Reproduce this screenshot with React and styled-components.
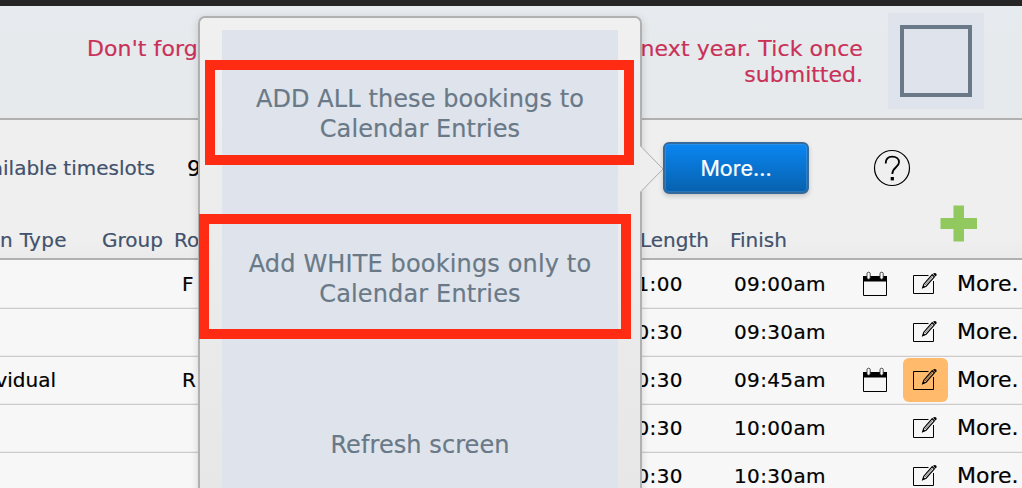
import React from "react";
import styled, { createGlobalStyle, css } from "styled-components";

const GlobalStyle = createGlobalStyle`
  * {
    box-sizing: border-box;
  }
  body {
    margin: 0;
    overflow: hidden;
    font-family: "DejaVu Sans", Verdana, sans-serif;
    -webkit-text-stroke: 0.2px;
  }
`;

const bookings = [
  { room: "F", length: "1:00", finish: "09:00am", calendar: true },
  { length: "0:30", finish: "09:30am" },
  { type: "vidual", room: "R", length: "0:30", finish: "09:45am", calendar: true, flagged: true },
  { length: "0:30", finish: "10:00am" },
  { length: "0:30", finish: "10:30am" },
];

const CalendarIcon = () => (
  <svg width="26" height="26" viewBox="0 0 26 26" fill="none">
    <path d="M1.5 5.5V24.5H24.5V5.5" stroke="#000" strokeWidth="1" />
    <path d="M1 5H25V10.5H1Z" fill="#000" />
    <rect x="5" y="1.2" width="3.2" height="7" rx="1.6" fill="#fff" stroke="#333" strokeWidth="0.9" />
    <rect x="18" y="1.2" width="3.2" height="7" rx="1.6" fill="#fff" stroke="#333" strokeWidth="0.9" />
  </svg>
);

const EditIcon = () => (
  <svg width="26" height="26" viewBox="0 0 26 26" fill="none">
    <path d="M16.5 4.5H1.5V22.5H21.5V10" stroke="#000" strokeWidth="1" />
    <path d="M20.2 3.7L11.8 13.2L10.7 16.7L14.1 15.2L22.4 5.8Z" stroke="#000" strokeWidth="1.2" />
    <path d="M20.5 5.5L13 14" stroke="#000" strokeWidth="0.5" />
    <path d="M10.2 17.3L11.4 14.2L13.2 15.8Z" fill="#000" />
    <path d="M21 2.7Q22.9 1.2 24.4 2.8Q25.4 4.4 23.5 5.6Z" fill="#000" />
  </svg>
);

const HelpIcon = () => (
  <svg width="38" height="38" viewBox="0 0 38 38" fill="none">
    <circle cx="19" cy="19" r="17.5" stroke="#000" strokeWidth="1.2" />
    <path d="M12.7 14.5C12.7 10 15.2 7.7 19.3 7.7C23.5 7.7 26 10 26 13.2C26 18.5 19.3 18.2 19.3 25" stroke="#000" strokeWidth="1.8" />
    <rect x="17.7" y="28" width="3.2" height="3.4" fill="#000" />
  </svg>
);

const App = () => {
  return (
    <Screen>
      <GlobalStyle />
      <TopStrip />
      <Banner>
        <Reminder>
          <ReminderLine>
            <span>Don't forg</span>
            <span>next year. Tick once</span>
          </ReminderLine>
          <div>submitted.</div>
        </Reminder>
        <TickArea>
          <TickBox />
        </TickArea>
      </Banner>
      <Filters>
        <FilterLabel>available timeslots</FilterLabel>
        <FilterValue>9</FilterValue>
        <MoreButton>More...</MoreButton>
        <HelpIcon />
      </Filters>
      <HeaderRow>
        <TypeHeader>n Type</TypeHeader>
        <Cell $left={35}>Group</Cell>
        <Cell>Ro</Cell>
        <Cell $end>Length</Cell>
        <Cell $left={21}>Finish</Cell>
        <AddIcon width="38" height="38" viewBox="0 0 38 38">
          <path d="M13.5 0.5H24V13H37V24H24V36.5H13.5V24H0.5V13H13.5Z" fill="#92c95f" />
        </AddIcon>
      </HeaderRow>
      {bookings.map((b) => (
        <BookingRow key={b.finish}>
          <TypeCell>{b.type}</TypeCell>
          <RoomCell>{b.room}</RoomCell>
          <LengthCell>{b.length}</LengthCell>
          <FinishCell>{b.finish}</FinishCell>
          <IconCell>{b.calendar && <CalendarIcon />}</IconCell>
          <EditButton $flagged={b.flagged}>
            <EditIcon />
          </EditButton>
          <RowMore>More.</RowMore>
        </BookingRow>
      ))}
      {/* POPOVER */}
      <Popover>
        <PopoverItem>ADD ALL these bookings to Calendar Entries</PopoverItem>
        <PopoverItem>Add WHITE bookings only to Calendar Entries</PopoverItem>
        <PopoverItem>Refresh screen</PopoverItem>
        <Arrow width="24" height="48" viewBox="0 0 24 48">
          <path d="M0 1.5H1.5L23 24L1.5 46.5H0Z" fill="#eeeeee" />
          <path d="M1 1.5L23 24L1 46.5" fill="none" stroke="#ababab" strokeWidth="1" />
        </Arrow>
      </Popover>
      {/* HIGHLIGHTS */}
      <Highlight $x={205} $y={60} $w={429} $h={105} />
      <Highlight $x={199} $y={214} $w={432} $h={125} />
    </Screen>
  );
};

const Screen = styled.div`
  position: relative;
  display: flex;
  flex-direction: column;
  width: 1022px;
  height: 488px;
  overflow: hidden;
  background: #efefef;
  white-space: nowrap;
`;

const TopStrip = styled.div`
  flex: none;
  height: 6px;
  background: #262626;
`;

const Banner = styled.div`
  flex: none;
  height: 114px;
  display: flex;
  justify-content: flex-end;
  padding: 7px 38px 0 87px;
  background: linear-gradient(#e6ebf0, #e6eaec 30%);
  border-bottom: 2px solid #b0b0b0;
`;

const Reminder = styled.div`
  flex: 1;
  padding: 23px 25px 0 0;
  font-size: 22px;
  line-height: 26px;
  text-align: right;
  color: #c93159;
`;

const ReminderLine = styled.div`
  display: flex;
  justify-content: space-between;
  letter-spacing: 0.1px;
`;

const TickArea = styled.div`
  width: 96px;
  height: 96px;
  padding: 12px;
  background: #dfe4ec;
`;

const TickBox = styled.div`
  width: 72px;
  height: 72px;
  border: 4px solid #697987;
`;

const Filters = styled.div`
  flex: none;
  height: 85px;
  display: flex;
  align-items: center;
  padding-top: 11px;
  & > svg {
    margin-left: 64px;
  }
`;

const FilterLabel = styled.div`
  width: 155px;
  display: flex;
  justify-content: flex-end;
  font-size: 20px;
  color: #42526c;
`;

const FilterValue = styled.div`
  width: 476px;
  margin-left: 32px;
  font-size: 22px;
  color: #000;
`;

const MoreButton = styled.button`
  width: 146px;
  height: 52px;
  padding: 0;
  border: 2px solid #356a9b;
  border-radius: 6px;
  background: linear-gradient(#0a86f2, #0761ae);
  box-shadow: inset 0 0 0 1px rgba(110, 160, 205, 0.35), 0 2px 5px rgba(0, 0, 0, 0.18);
  font-family: Inter, sans-serif;
  font-size: 21.5px;
  color: #fff;
`;

const HeaderRow = styled.div`
  flex: none;
  height: 55px;
  display: grid;
  grid-template-columns: 67px 107px 466px 69px 231px 38px;
  background: linear-gradient(#efefef 60%, #ebebeb);
  border-bottom: 2px solid #b0b0b0;
  font-size: 20px;
  line-height: 24px;
  color: #42526c;
`;

const Cell = styled.div`
  padding-top: 23px;
  padding-left: ${(props) => props.$left || 0}px;
  ${(props) =>
    props.$end &&
    css`
      display: flex;
      justify-content: flex-end;
    `}
`;

const TypeHeader = styled(Cell)`
  letter-spacing: 0.3px;
`;

const AddIcon = styled.svg`
  display: block;
`;

const BookingRow = styled.div`
  flex: none;
  height: 48px;
  display: grid;
  grid-template-columns: 56px 444px 183px 179px 41px 45px 1fr;
  align-items: center;
  padding-bottom: 2px;
  background: #f7f7f7;
  border-bottom: 1px solid #cccccc;
  box-shadow: inset 0 -1px #ececec;
  font-size: 20px;
  color: #000;
  ${HeaderRow} + & {
    height: 49px;
    padding-top: 1px;
    border-top: 0;
  }
`;

const TypeCell = styled.div`
  display: flex;
  justify-content: flex-end;
`;

const RoomCell = styled.div`
  padding-left: 126px;
`;

const LengthCell = styled.div`
  text-align: right;
  letter-spacing: 0.4px;
`;

const FinishCell = styled.div`
  padding-left: 51px;
  letter-spacing: 0.35px;
`;

const IconCell = styled.div`
  display: flex;
`;

const EditButton = styled.div`
  height: 44px;
  display: flex;
  align-items: center;
  padding-left: 9px;
  border-radius: 6px;
  background: ${(props) => (props.$flagged ? "#ffba6b" : "transparent")};
`;

const RowMore = styled.div`
  padding-left: 9px;
  font-size: 22px;
`;

const Popover = styled.div`
  position: absolute;
  top: 16px;
  left: 198px;
  width: 444px;
  height: 480px;
  padding: 12px 22px;
  border: 2px solid #b0b0b0;
  border-radius: 7px;
  background: linear-gradient(#f0f0f0, #e7e7e7);
  box-shadow: 0 2px 8px rgba(0, 0, 0, 0.15);
`;

const PopoverItem = styled.div`
  height: 165px;
  display: flex;
  align-items: center;
  justify-content: center;
  padding: 2px 20px 0;
  background: #dfe4ec;
  font-size: 24px;
  line-height: 30px;
  letter-spacing: 0.08px;
  text-align: center;
  white-space: normal;
  color: #697987;
  &:nth-child(2) {
    letter-spacing: 0.15px;
  }
  &:nth-child(3) {
    padding-top: 4px;
  }
`;

const Arrow = styled.svg`
  position: absolute;
  top: 127px;
  left: 440px;
`;

const Highlight = styled.div`
  position: absolute;
  left: ${(props) => props.$x}px;
  top: ${(props) => props.$y}px;
  width: ${(props) => props.$w}px;
  height: ${(props) => props.$h}px;
  border: 10px solid #ff2b12;
`;

export default App;
